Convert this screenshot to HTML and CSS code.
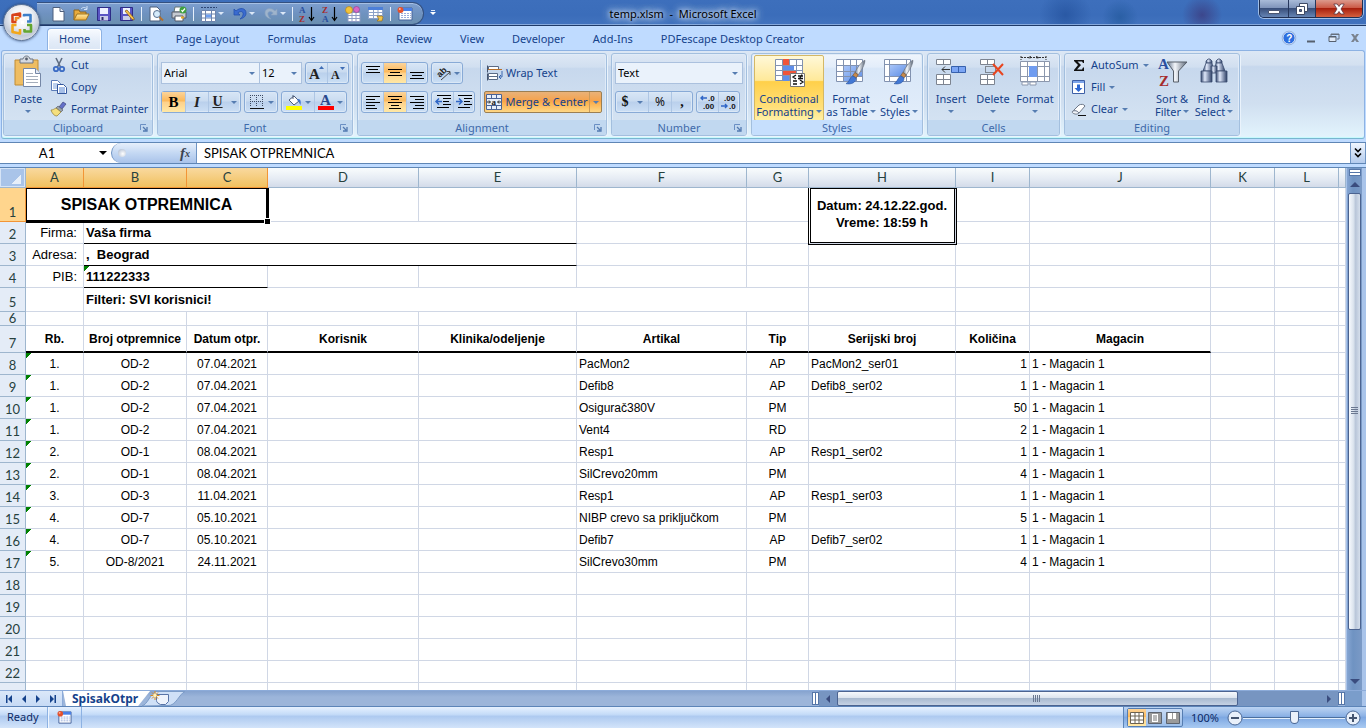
FILE: index.html
```html
<!DOCTYPE html>
<html lang="sr">
<head>
<meta charset="utf-8">
<title>temp.xlsm - Microsoft Excel</title>
<link rel="stylesheet" href="styles.css">
</head>
<body>
<svg class="defs" aria-hidden="true">
  <defs>
    <linearGradient id="gSteel" x1="0" y1="0" x2="1" y2="0"><stop offset="0" stop-color="#5f6f87"/><stop offset=".4" stop-color="#f4f7fb"/><stop offset="1" stop-color="#5b6778"/></linearGradient>
    <linearGradient id="gBlue" x1="0" y1="0" x2="1" y2="1"><stop offset="0" stop-color="#a9c5f8"/><stop offset="1" stop-color="#5f8fe6"/></linearGradient>
    <linearGradient id="gBino" x1="0" y1="0" x2="1" y2="0"><stop offset="0" stop-color="#35496f"/><stop offset=".35" stop-color="#dfe8fa"/><stop offset="1" stop-color="#2c3f66"/></linearGradient>
    <linearGradient id="gFolder" x1="0" y1="0" x2="0" y2="1"><stop offset="0" stop-color="#ffe9a0"/><stop offset="1" stop-color="#f0b040"/></linearGradient>
    <symbol id="record" viewBox="0 0 16 16"><path d="M2 2h13v12H2z" fill="#fff" stroke="#44629c"/><path d="M2 2h13v3H2z" fill="#4a80e8"/><path d="M4 7.500h10M4 9.500h10M4 11.500h10" stroke="#9aaedc" stroke-dasharray="2 1"/><circle cx="3.500" cy="4" r="3" fill="#e4512c"/><circle cx="2.800" cy="3" r="1" fill="#ffb39a"/></symbol>
    <symbol id="launch" viewBox="0 0 8 8"><path d="M.5 6V.5H6" fill="none" stroke="#6a8fc4"/><path d="M3 3l3 3M7 3v4H3" fill="none" stroke="#5279b0" stroke-width="1.300"/></symbol>
    <symbol id="brush" viewBox="0 0 18 24"><path d="M17 1c-3 1-7 7-9 11l3 2C14 10 17 5 17 1z" fill="url(#gSteel)" stroke="#69707c" stroke-width=".6"/><path d="M8 12l3 2-2 3-3-2z" fill="#c98a4b" stroke="#7c5a36" stroke-width=".6"/><path d="M6 15l3 2c0 4-4 6-9 5 3-1 3-5 6-7z" fill="#4278d4" stroke="#2b56a5" stroke-width=".6"/></symbol>
  </defs>
</svg>

<header class="titlebar">
  <div class="qat" role="toolbar" aria-label="Quick access">
    <button aria-label="New"><svg viewBox="0 0 16 16"><path d="M3 1.500h7l4 4V15H3z" fill="#fff" stroke="#4d5f7d"/><path d="M10 1.500v4h4" fill="#dbe5f5" stroke="#4d5f7d"/></svg></button>
    <button aria-label="Open"><svg viewBox="0 0 16 16"><path d="M1 14V4h5l1 2h6v3" fill="#e8ab3c" stroke="#8d651c"/><path d="M1 14L4 8h12l-3 6z" fill="url(#gFolder)" stroke="#a1741f"/><path d="M8 3c2-2 4-2 6 0M14 0v3.500h-3" fill="none" stroke="#d3e3f8"/></svg></button>
    <button aria-label="Save"><svg viewBox="0 0 16 16"><path d="M1.500 1.500h13v13h-13z" fill="#5a55c4" stroke="#2d2b86"/><path d="M4 2h8v6H4z" fill="#eef1ff"/><path d="M4 10h8v4.500H4z" fill="#c9cdea"/><path d="M5.500 11h2v3h-2z" fill="#2b2a6b"/></svg></button>
    <button aria-label="Save as"><svg viewBox="0 0 16 16"><path d="M1.500 1.500h12v13h-12z" fill="#5a55c4" stroke="#2d2b86"/><path d="M4 2h7v6H4z" fill="#eef1ff"/><path d="M4 10h7v4H4z" fill="#c9cdea"/><path d="M6 5l2-1 7 8v2l-2-.5z" fill="#f6c04b" stroke="#7a5415" stroke-width=".7"/></svg></button>
    <span class="qsep"></span>
    <button aria-label="Print preview"><svg viewBox="0 0 16 16"><path d="M2 1h7l3 3v11H2z" fill="#fff" stroke="#4d5f7d"/><circle cx="9" cy="8" r="3.500" fill="#d5ebfa" stroke="#58708f"/><path d="M11.500 11l3.500 3.500" stroke="#b36f2b" stroke-width="2"/></svg></button>
    <button aria-label="Print"><svg viewBox="0 0 16 16"><path d="M4 1h7l1 5H3z" fill="#fff" stroke="#677"/><path d="M1 6h14v6H1z" fill="#c5c9d0" stroke="#545b68"/><path d="M4 10h8v5H4z" fill="#fff" stroke="#545b68"/><path d="M10 11.500h3" stroke="#e8a825" stroke-width="2"/><circle cx="12" cy="4" r="3.500" fill="#3fa03f"/><path d="M10.500 4l1 1.500L14 2.500" fill="none" stroke="#fff" stroke-width="1.200"/></svg></button>
    <span class="qsep"></span>
    <button class="split" aria-label="Format cells"><svg viewBox="0 0 16 16"><path d="M.5 4.500h14v11H.5zM.5 8h14M.5 12h14M4.500 4v11M10.500 4v11" fill="#fff" stroke="#6d84ad"/><path d="M5 8.500h5v3H5z" fill="#6fa0f0"/><path d="M0 1.500h16" stroke="#2d4674" stroke-dasharray="2 1"/></svg><i class="dd light"></i></button>
    <button class="split" aria-label="Undo"><svg viewBox="0 0 16 16"><path d="M2 3v6h6L5.800 7C9 4 12 6 11 9c-.5 2-2 3-3 4 4-1 6-3 6-6 0-5-6-6-10-2z" fill="#3a6bd0" stroke="#2550ad" stroke-width=".8"/></svg><i class="dd light"></i></button>
    <button class="split" aria-label="Redo"><svg viewBox="0 0 16 16"><path d="M14 3v6H8l2.200-2C7 4 4 6 5 9c.5 2 2 3 3 4-4-1-6-3-6-6 0-5 6-6 10-2z" fill="#9fb4cc" stroke="#89a2bf" stroke-width=".6"/></svg><i class="dd light"></i></button>
    <span class="qsep"></span>
    <button aria-label="Sort A to Z"><svg viewBox="0 0 16 16"><text x="0" y="7" class="az blue">A</text><text x="0" y="16" class="az red">Z</text><path d="M12.500 1v13M10 11l2.500 3.500L15 11" fill="none" stroke="#000" stroke-width="1.200"/></svg></button>
    <button aria-label="Sort Z to A"><svg viewBox="0 0 16 16"><text x="0" y="7" class="az red">Z</text><text x="0" y="16" class="az blue">A</text><path d="M12.500 1v13M10 11l2.500 3.500L15 11" fill="none" stroke="#000" stroke-width="1.200"/></svg></button>
    <button aria-label="Pivot"><svg viewBox="0 0 16 16"><path d="M3 6.500h12v9H3zM3 9.500h12M3 12.500h12M7 6v9M11 6v9" fill="#fff" stroke="#8f9cc4"/><circle cx="4" cy="4" r="3.500" fill="#f3c33a" stroke="#a97a14" stroke-width=".6"/><circle cx="11.500" cy="3.500" r="3" fill="#d768c8" stroke="#923a86" stroke-width=".6"/></svg></button>
    <button aria-label="Table properties"><svg viewBox="0 0 16 16"><path d="M.5 1.500h14v11H.5zM1 6.500h13M1 9.500h13M5.500 4v8M10 4v8" fill="#fff" stroke="#8da2c9"/><path d="M0 1h15v3H0z" fill="#4c7fd8"/><path d="M9 10h5l1 1-1 4H9l2-2z" fill="#f2c54e" stroke="#94701f" stroke-width=".7"/></svg></button>
    <span class="qsep"></span>
    <button aria-label="Record macro"><svg><use href="#record"/></svg></button>
  </div>
  <h1 class="doc-title">temp.xlsm&nbsp; -&nbsp; Microsoft Excel</h1>
  <div class="win-buttons">
    <button class="wmin" aria-label="Minimize"><svg viewBox="0 0 12 12"><path d="M.5 7.500h11v3H.5z" fill="#fff" stroke="#4b5671"/></svg></button>
    <button class="wmax" aria-label="Restore"><svg viewBox="0 0 12 12"><path d="M3.500.5h8v8h-8z" fill="#fff" stroke="#3e4a66"/><path d="M.5 3.500h8v8h-8z" fill="#fff" stroke="#3e4a66"/><path d="M3.500 6.500h2v2h-2z" fill="#5c6d90" stroke="#3e4a66"/></svg></button>
    <button class="wclose" aria-label="Close"><svg viewBox="0 0 12 12"><path d="M.8 1h3.400L6 3.500 7.800 1h3.400L8 6l3.200 5H7.800L6 8.500 4.200 11H.8L4 6z" fill="#fff" stroke="#5a3540" stroke-width=".8"/></svg></button>
  </div>
</header>

<button class="office" aria-label="Office menu"><svg viewBox="0 0 24 24"><g fill="none" stroke-width="2.600" stroke-linejoin="round"><path d="M10 6.500V2.500L2.500 4v7h4" stroke="#d8421b"/><path d="M6 10V7h3.500" stroke="#ef8b21"/><path d="M14 5.500V4h6.500v6.500H17" stroke="#3d7fc9"/><path d="M6.500 14h-4v7l7.500 1.500V18" stroke="#f2a71b"/><path d="M17 14h4v6.500h-6.500V18" stroke="#63a62f"/></g><path d="M11 10h3v3h-3z" fill="#fff"/></svg></button>

<nav class="tabs" role="tablist">
  <button role="tab" class="active" aria-selected="true">Home</button>
  <button role="tab">Insert</button>
  <button role="tab">Page Layout</button>
  <button role="tab">Formulas</button>
  <button role="tab">Data</button>
  <button role="tab">Review</button>
  <button role="tab">View</button>
  <button role="tab">Developer</button>
  <button role="tab">Add-Ins</button>
  <button role="tab">PDFescape Desktop Creator</button>
  <div class="doc-controls">
    <button aria-label="Help"><svg viewBox="0 0 14 14"><circle cx="7" cy="7" r="6.200" fill="#2d6fe0" stroke="#fff"/><circle cx="7" cy="7" r="6.800" fill="none" stroke="#5b7fb8" stroke-width=".5"/><text x="4.300" y="10.800" class="q">?</text></svg></button>
    <button aria-label="Minimize workbook"><svg viewBox="0 0 14 14"><path d="M3 10.500h8" stroke="#56606e" stroke-width="2"/></svg></button>
    <button aria-label="Restore workbook"><svg viewBox="0 0 14 14"><path d="M5 5V3h8v5h-2M5 3.500h8" fill="none" stroke="#66707e"/><path d="M3 5.500h7v5H3zM3 6h7" fill="#dfe9f7" stroke="#56606e"/></svg></button>
    <button aria-label="Close workbook"><svg viewBox="0 0 14 14"><path d="M3 3h2.500L7 5l1.500-2H11L8.300 7l2.700 4H8.500L7 9l-1.500 2H3l2.700-4z" fill="#7a838f"/></svg></button>
  </div>
</nav>

<section class="ribbon" aria-label="Home">
  <div class="group g-clip">
    <div class="gbody">
      <button class="big paste"><svg class="i32" viewBox="0 0 32 32"><path d="M3 4h23v25H3z" fill="#efbd62" stroke="#c08c34"/><path d="M8 3h3c1-4 6-4 7 0h3v4H8z" fill="#d5d9e0" stroke="#6d7582"/><circle cx="14.500" cy="3" r="1.400" fill="#565e6b"/><path d="M11.500 12.500h12l5 5v13h-17z" fill="#fff" stroke="#7587a6"/><path d="M23.500 12.500v5h5" fill="#e4ebf6" stroke="#7587a6"/><path d="M14 17.500h7M14 20.500h12M14 23.500h12M14 26.500h12" stroke="#a5aebb"/></svg><span>Paste</span><i class="dd"></i></button>
      <div class="stack">
        <button class="row"><svg viewBox="0 0 16 16"><path d="M5 1l4.500 9M11 1L6.500 10" stroke="#5f6d83" stroke-width="1.600"/><circle cx="5" cy="12" r="2.200" fill="none" stroke="#3c6cc4" stroke-width="1.800"/><circle cx="11" cy="12" r="2.200" fill="none" stroke="#3c6cc4" stroke-width="1.800"/></svg>Cut</button>
        <button class="row"><svg viewBox="0 0 16 16"><path d="M.5 1.500h6l3 3v7h-9z" fill="#fff" stroke="#5a7bb8"/><path d="M2 5h5M2 7h5M2 9h5" stroke="#7aa0dc"/><path d="M6.500 5.500h6l3 3v6h-9z" fill="#fff" stroke="#34589e"/><path d="M8 9h6M8 11h6M8 13h6" stroke="#4f80d0"/></svg>Copy</button>
        <button class="row"><svg viewBox="0 0 16 16"><path d="M12 1l3 2-4 5-3-2z" fill="#6470c8" stroke="#3f467e" stroke-width=".7"/><path d="M7 5l5 4-2 2-5-4z" fill="#9aa3ad" stroke="#5b626c" stroke-width=".7"/><path d="M5 7l5 4-4 4c-3 0-5-3-6-6 2 0 3-1 5-2z" fill="#f5df7d" stroke="#8c7a34" stroke-width=".7"/></svg>Format Painter</button>
      </div>
    </div>
    <div class="glabel">Clipboard<svg class="launch"><use href="#launch"/></svg></div>
  </div>

  <div class="group g-font">
    <div class="gbody col">
      <div class="line">
        <div class="combo-set">
          <span class="combo name"><select aria-label="Font"><option>Arial</option></select><i class="dd"></i></span>
          <span class="combo size"><select aria-label="Font size"><option>12</option></select><i class="dd"></i></span>
        </div>
        <div class="bset"><button class="w22" aria-label="Grow font"><svg viewBox="0 0 16 16"><text x="0" y="14" class="ser s15">A</text><path d="M10 4l2.500-3L15 4z" fill="#3f6db5"/></svg></button><button class="w22" aria-label="Shrink font"><svg viewBox="0 0 16 16"><text x="1" y="14" class="ser s12">A</text><path d="M10 2h5l-2.500 3z" fill="#3f6db5"/></svg></button></div>
      </div>
      <div class="line">
        <div class="bset"><button class="w23 on bold" aria-label="Bold">B</button><button class="w23 ital" aria-label="Italic">I</button><button class="w33 under" aria-label="Underline"><u>U</u><i class="dd"></i></button></div>
        <div class="bset"><button class="w33" aria-label="Borders"><svg viewBox="0 0 16 16"><path d="M1.500 1v12M7.500 1v12M13.500 1v12M1 1.500h13M1 7.500h13" stroke="#3d4a62" stroke-dasharray="1 1"/><path d="M1 14.500h14" stroke="#111"/></svg><i class="dd"></i></button></div>
        <div class="bset"><button class="w33" aria-label="Fill colour"><svg viewBox="0 0 16 16"><path d="M3 6l5-4 5 5-5 4z" fill="#fff" stroke="#4c5c79"/><path d="M7 5V1" stroke="#4c5c79"/><path d="M12 5c3 0 3 3 2.500 6C13 9 13 7 11 6z" fill="#3e74cc"/><path d="M0 12h16v4H0z" fill="#ff0"/></svg><i class="dd"></i></button><button class="w33" aria-label="Font colour"><svg viewBox="0 0 16 16"><text x="2" y="11" class="ser s15 navy">A</text><path d="M0 12h16v4H0z" fill="#f00"/></svg><i class="dd"></i></button></div>
      </div>
    </div>
    <div class="glabel">Font<svg class="launch"><use href="#launch"/></svg></div>
  </div>

  <div class="group g-align">
    <div class="gbody">
      <div class="col">
        <div class="line">
          <div class="bset"><button class="w22" aria-label="Top align"><svg viewBox="0 0 16 16"><path d="M1 1.500h14M3 4.500h10M1 7.500h14" class="k"/></svg></button><button class="w23 on" aria-label="Middle align"><svg viewBox="0 0 16 16"><path d="M1 4.500h14M3 7.500h10M1 10.500h14" class="k"/></svg></button><button class="w22" aria-label="Bottom align"><svg viewBox="0 0 16 16"><path d="M1 7.500h14M3 10.500h10M1 13.500h14" class="k"/></svg></button></div>
          <div class="bset"><button class="w30" aria-label="Orientation"><svg viewBox="0 0 16 16"><text x="2" y="10" transform="rotate(-45 7 8)" class="ori">ab</text><path d="M6 15l9-8M11.500 6.500H15V10" fill="none" stroke="#444"/></svg><i class="dd"></i></button></div>
        </div>
        <div class="line">
          <div class="bset"><button class="w22" aria-label="Align left"><svg viewBox="0 0 16 16"><path d="M1 2.500h14M1 5.500h9M1 8.500h14M1 11.500h9M1 14.500h11" class="k"/></svg></button><button class="w23 on" aria-label="Center"><svg viewBox="0 0 16 16"><path d="M1 2.500h14M4 5.500h8M1 8.500h14M4 11.500h8M2 14.500h12" class="k"/></svg></button><button class="w22" aria-label="Align right"><svg viewBox="0 0 16 16"><path d="M1 2.500h14M6 5.500h9M1 8.500h14M6 11.500h9M4 14.500h11" class="k"/></svg></button></div>
          <div class="bset"><button class="w22" aria-label="Decrease indent"><svg viewBox="0 0 16 16"><path d="M2 1.500h14M8 4.500h8M8 7.500h6M8 10.500h8M2 13.500h12" class="k"/><path d="M7 7.500H1M4 4.500l-3 3 3 3" fill="none" stroke="#2f66c6" stroke-width="1.500"/></svg></button><button class="w22" aria-label="Increase indent"><svg viewBox="0 0 16 16"><path d="M2 1.500h14M8 4.500h8M8 7.500h6M8 10.500h8M2 13.500h12" class="k"/><path d="M0 7.500h6M3 4.500l3 3-3 3" fill="none" stroke="#2f66c6" stroke-width="1.500"/></svg></button></div>
        </div>
      </div>
      <div class="col wrapcol">
        <button class="wrap"><svg viewBox="0 0 16 16"><path d="M.5.5v7M.5 8.500v7" stroke="#44546f"/><path d="M1.500 1.500h10v3h-10zM1.500 8.500h9v3h-9zM1.500 11.500h9v3h-9z" fill="#fff" stroke="#5a6b86"/><path d="M1 4.500h14" fill="none" stroke="#b66f2b"/><path d="M15 6v6h-3M14 10l-2 2 2 2" fill="none" stroke="#3a66b0"/></svg>Wrap Text</button>
        <div class="merge"><button><svg viewBox="0 0 16 16"><path d="M.5.5h15v15H.5zM.5 4.500h15M.5 11.500h15M5.500.5v4M10.500.5v4M5.500 11.500v4M10.500 11.500v4" fill="#e8f0fb" stroke="#4a6496"/><path d="M1 8h3M15 8h-3M3 6.500L4.500 8 3 9.500M13 6.500L11.500 8 13 9.500" fill="none" stroke="#222"/><text x="5.500" y="10.500" class="ser s9">a</text></svg>Merge &amp; Center</button><button class="arrow" aria-label="Merge options"><i class="dd"></i></button></div>
      </div>
    </div>
    <div class="glabel">Alignment<svg class="launch"><use href="#launch"/></svg></div>
  </div>

  <div class="group g-num">
    <div class="gbody col">
      <div class="line"><span class="combo fmt"><select aria-label="Number format"><option>Text</option></select><i class="dd"></i></span></div>
      <div class="line">
        <div class="bset"><button class="w33 cur" aria-label="Currency">$<i class="dd"></i></button><button class="w23 pct" aria-label="Percent">%</button><button class="w22 cur" aria-label="Comma style">,</button></div>
        <div class="bset"><button class="w22" aria-label="Increase decimal"><svg viewBox="0 0 16 16"><text x="8" y="7" class="dec">.0</text><text x="3" y="15" class="dec">.00</text><path d="M7 4H1M3 2L1 4l2 2" fill="none" stroke="#2f66c6" stroke-width="1.400"/></svg></button><button class="w22" aria-label="Decrease decimal"><svg viewBox="0 0 16 16"><text x="3" y="7" class="dec">.00</text><text x="8" y="15" class="dec">.0</text><path d="M0 12h6M4 10l2 2-2 2" fill="none" stroke="#2f66c6" stroke-width="1.400"/></svg></button></div>
      </div>
    </div>
    <div class="glabel">Number<svg class="launch"><use href="#launch"/></svg></div>
  </div>

  <div class="group g-styles hot">
    <div class="gbody">
      <button class="big on cond"><svg class="i32" viewBox="0 0 32 32"><path d="M2.500 3.500h27v21h-27zM2.500 9.500h27M2.500 14.500h27M2.500 19.500h27M9.500 3v21M16.500 3v21M23.500 3v21" fill="#fff" stroke="#8292b0"/><path d="M10 3h6v6h-6zM10 15h13v4H10z" fill="#f0543a"/><path d="M10 10h11v4H10zM10 20h6v5h-6z" fill="#5f8eea"/><path d="M17.500 17.500h14v13h-14z" fill="#fff" stroke="#777"/><path d="M23 19l-3 2 3 2M20 25h4M25 20h5M25 22.500h5M29 18.500l-3 5M27 24l3 2-3 2M20 28h4" fill="none" stroke="#111" stroke-width="1.300"/></svg><span>Conditional</span><span>Formatting <i class="dd"></i></span></button>
      <button class="big"><svg class="i32" viewBox="0 0 32 32"><path d="M1.500 3.500h26v22h-26zM1.500 9.500h26M1.500 15.500h26M1.500 20.500h26M8.500 3v22M15.500 3v22M21.500 3v22" fill="#fff" stroke="#8292b0"/><path d="M9 10h6v5H9zM16 10h5v5h-5zM22 10h5v5h-5zM9 16h6v4H9zM16 16h5v4h-5zM22 16h5v4h-5zM9 21h6v4H9z" fill="url(#gBlue)"/><use href="#brush" x="11" y="3" width="20" height="27"/></svg><span>Format</span><span>as Table <i class="dd"></i></span></button>
      <button class="big"><svg class="i32" viewBox="0 0 32 32"><path d="M1.500 3.500h26v22h-26zM1.500 8.500h26M1.500 20.500h26M6.500 3v22M23.500 3v22" fill="#fff" stroke="#8292b0"/><path d="M7 9h16v11H7z" fill="url(#gBlue)"/><use href="#brush" x="11" y="3" width="20" height="27"/></svg><span>Cell</span><span>Styles <i class="dd"></i></span></button>
    </div>
    <div class="glabel">Styles</div>
  </div>

  <div class="group g-cells">
    <div class="gbody">
      <button class="big"><svg class="i32" viewBox="0 0 32 32"><path d="M1.500 3.500h14v5h-14zM8.500 3.500v5M1.500 18.500h14v10h-14zM8.500 18.500v10M1.500 23.500h14" fill="#fff" stroke="#7d8490"/><path d="M16.500 10.500h14v6h-14z" fill="#7ba5f4" stroke="#3761ad"/><path d="M23.500 10.500v6" stroke="#3761ad"/><path d="M15 13.500H7M10 10.500l-3 3 3 3" fill="none" stroke="#333"/></svg><span>Insert</span><i class="dd"></i></button>
      <button class="big"><svg class="i32" viewBox="0 0 32 32"><path d="M3.500 3.500h14v5h-14zM10.500 3.500v5M3.500 18.500h14v10h-14zM10.500 18.500v10M3.500 23.500h14" fill="#fff" stroke="#7d8490"/><path d="M8.500 10.500h10v6h-10z" fill="none" stroke="#333" stroke-dasharray="1 1"/><path d="M16 8l10 11M26 8L16 19" stroke="#e8451f" stroke-width="2"/></svg><span>Delete</span><i class="dd"></i></button>
      <button class="big"><svg class="i32" viewBox="0 0 32 32"><path d="M2 1.500h25M2 0v4M27 0v4M12 .500l-3 1 3 1M17 .5l3 1-3 1" fill="none" stroke="#333" stroke-dasharray="2 1"/><path d="M1.500 5.500h29v20h-29zM1.500 10.500h29M1.500 20.500h29M8.500 5v20M18.500 5v20M25.500 5v20" fill="#fff" stroke="#8b97ad"/><path d="M10 10h8v11h-8z" fill="#6f9cf0"/><path d="M3 26h6v3H3zM11 26h6v3h-6z" fill="#fff" stroke="#8b97ad"/></svg><span>Format</span><i class="dd"></i></button>
    </div>
    <div class="glabel">Cells</div>
  </div>

  <div class="group g-edit">
    <div class="gbody">
      <div class="stack">
        <button class="row"><svg viewBox="0 0 16 16"><path d="M3 3h10v3h-1L11 4.500H6.500L10 8l-4 4.500h5l1-2h1V14H3v-1l4-5-4-4z" fill="#111"/></svg>AutoSum <i class="dd"></i></button>
        <button class="row"><svg viewBox="0 0 16 16"><path d="M1.500 1.500h12v13h-12z" fill="#fff" stroke="#3d5fa6"/><path d="M2 2h11v2H2z" fill="#7ca4ea"/><path d="M6 5.500h3V9h2.500l-4 4-4-4H6z" fill="#2d67d2"/></svg>Fill <i class="dd"></i></button>
        <button class="row"><svg viewBox="0 0 16 16"><path d="M1 11l7-7c2-1 5-1 6 1l-6 7c-2 2-6 1-7-1z" fill="#fff" stroke="#6d7788"/><path d="M1 11c1-2 5-2 7 1" fill="#dfe5ef" stroke="#6d7788"/><path d="M7 14.500h8" stroke="#111"/></svg>Clear <i class="dd"></i></button>
      </div>
      <button class="big"><svg class="i32" viewBox="0 0 32 32"><text x="2" y="13" class="az2 blue">A</text><text x="3" y="30" class="az2 red">Z</text><path d="M11 6h20L22.500 15v11h-5V15z" fill="url(#gSteel)" stroke="#565e69"/></svg><span>Sort &amp;</span><span>Filter <i class="dd"></i></span></button>
      <button class="big"><svg class="i32" viewBox="0 0 32 32"><g fill="url(#gBino)" stroke="#3b4c70" stroke-width=".8"><path d="M8 7V5l2-2h2l2 2v2z"/><path d="M18 7V5l2-2h2l2 2v2z"/><path d="M5 15l3-8h6l1.500 8z"/><path d="M16.500 15L18 7h6l3 8z"/><path d="M13 10h6v7h-6z"/><path d="M3 15h11v11H3z"/><path d="M18 15h11v11H18z"/></g></svg><span>Find &amp;</span><span>Select <i class="dd"></i></span></button>
    </div>
    <div class="glabel">Editing</div>
  </div>
</section>

<div class="formula-bar">
  <input class="name-box" aria-label="Name box" value="A1">
  <button class="name-drop" aria-label="Names"><i class="dd black"></i></button>
  <div class="fx"><span class="knob"></span><button aria-label="Insert function">f<small>x</small></button></div>
  <input class="formula" aria-label="Formula" value="SPISAK OTPREMNICA">
  <button class="expand" aria-label="Expand formula bar"><svg viewBox="0 0 10 12"><path d="M2 1.500l3 3 3-3M2 6.500l3 3 3-3" fill="none" stroke="#000" stroke-width="1.600"/></svg></button>
</div>

<main class="workspace">
  <div class="sheet">
    <table>
      <colgroup><col class="c-h"><col class="c-a"><col class="c-b"><col class="c-c"><col class="c-d"><col class="c-e"><col class="c-f"><col class="c-g"><col class="c-h1"><col class="c-i"><col class="c-j"><col class="c-k"><col class="c-k"><col></colgroup>
      <thead><tr><th class="corner"></th><th class="sel">A</th><th class="sel">B</th><th class="sel">C</th><th>D</th><th>E</th><th>F</th><th>G</th><th>H</th><th>I</th><th>J</th><th>K</th><th>L</th><th></th></tr></thead>
      <tbody>
        <tr class="r1"><th class="sel">1</th><td colspan="3" class="title">SPISAK OTPREMNICA<span class="handle"></span></td><td><td><td><td><td rowspan="2" class="stamp">Datum: 24.12.22.god.<br>Vreme: 18:59 h</td><td><td><td><td><td></tr>
        <tr class="info"><th>2</th><td class="lab">Firma:</td><td colspan="4" class="val line-b">Vaša firma</td><td><td><td><td><td><td><td></tr>
        <tr class="info"><th>3</th><td class="lab">Adresa:</td><td colspan="4" class="val line-b">,&nbsp; Beograd</td><td><td><td><td><td><td><td><td></tr>
        <tr class="info"><th>4</th><td class="lab">PIB:</td><td colspan="2" class="val line-b flag">111222333</td><td><td><td><td><td><td><td><td><td><td></tr>
        <tr class="r5"><th>5</th><td></td><td colspan="6" class="val">Filteri: SVI korisnici!</td><td><td><td><td><td><td></tr>
        <tr class="r6"><th>6</th><td><td><td><td><td><td><td><td><td><td><td><td><td></tr>
        <tr class="r7"><th>7</th><td class="hd">Rb.</td><td class="hd">Broj otpremnice</td><td class="hd">Datum otpr.</td><td class="hd">Korisnik</td><td class="hd">Klinika/odeljenje</td><td class="hd">Artikal</td><td class="hd">Tip</td><td class="hd">Serijski broj</td><td class="hd">Količina</td><td class="hd">Magacin</td><td><td><td></tr>
        <tr><th>8</th><td class="c flag">1.</td><td class="c">OD-2</td><td class="c">07.04.2021</td><td><td><td>PacMon2</td><td class="c">AP</td><td>PacMon2_ser01</td><td class="n">1</td><td>1 - Magacin 1</td><td><td><td></tr>
        <tr><th>9</th><td class="c flag">1.</td><td class="c">OD-2</td><td class="c">07.04.2021</td><td><td><td>Defib8</td><td class="c">AP</td><td>Defib8_ser02</td><td class="n">1</td><td>1 - Magacin 1</td><td><td><td></tr>
        <tr><th>10</th><td class="c flag">1.</td><td class="c">OD-2</td><td class="c">07.04.2021</td><td><td><td>Osigurač380V</td><td class="c">PM</td><td></td><td class="n">50</td><td>1 - Magacin 1</td><td><td><td></tr>
        <tr><th>11</th><td class="c flag">1.</td><td class="c">OD-2</td><td class="c">07.04.2021</td><td><td><td>Vent4</td><td class="c">RD</td><td></td><td class="n">2</td><td>1 - Magacin 1</td><td><td><td></tr>
        <tr><th>12</th><td class="c flag">2.</td><td class="c">OD-1</td><td class="c">08.04.2021</td><td><td><td>Resp1</td><td class="c">AP</td><td>Resp1_ser02</td><td class="n">1</td><td>1 - Magacin 1</td><td><td><td></tr>
        <tr><th>13</th><td class="c flag">2.</td><td class="c">OD-1</td><td class="c">08.04.2021</td><td><td><td>SilCrevo20mm</td><td class="c">PM</td><td></td><td class="n">4</td><td>1 - Magacin 1</td><td><td><td></tr>
        <tr><th>14</th><td class="c flag">3.</td><td class="c">OD-3</td><td class="c">11.04.2021</td><td><td><td>Resp1</td><td class="c">AP</td><td>Resp1_ser03</td><td class="n">1</td><td>1 - Magacin 1</td><td><td><td></tr>
        <tr><th>15</th><td class="c flag">4.</td><td class="c">OD-7</td><td class="c">05.10.2021</td><td><td><td>NIBP crevo sa priključkom</td><td class="c">PM</td><td></td><td class="n">5</td><td>1 - Magacin 1</td><td><td><td></tr>
        <tr><th>16</th><td class="c flag">4.</td><td class="c">OD-7</td><td class="c">05.10.2021</td><td><td><td>Defib7</td><td class="c">AP</td><td>Defib7_ser02</td><td class="n">1</td><td>1 - Magacin 1</td><td><td><td></tr>
        <tr><th>17</th><td class="c flag">5.</td><td class="c">OD-8/2021</td><td class="c">24.11.2021</td><td><td><td>SilCrevo30mm</td><td class="c">PM</td><td></td><td class="n">4</td><td>1 - Magacin 1</td><td><td><td></tr>
        <tr><th>18</th><td><td><td><td><td><td><td><td><td><td><td><td><td></tr>
        <tr><th>19</th><td><td><td><td><td><td><td><td><td><td><td><td><td></tr>
        <tr><th>20</th><td><td><td><td><td><td><td><td><td><td><td><td><td></tr>
        <tr><th>21</th><td><td><td><td><td><td><td><td><td><td><td><td><td></tr>
        <tr><th>22</th><td><td><td><td><td><td><td><td><td><td><td><td><td></tr>
        <tr><th></th><td><td><td><td><td><td><td><td><td><td><td><td><td></tr>
      </tbody>
    </table>
  </div>
  <div class="vscroll">
    <span class="splitbox"></span>
    <i class="arr up"></i>
    <div class="vtrack"><div class="vthumb"><span class="grip"></span></div></div>
    <i class="arr down"></i>
  </div>
</main>

<div class="sheet-bar">
  <div class="sheet-nav">
    <button aria-label="First sheet"><svg viewBox="0 0 8 8"><path d="M1 0h1.500v8H1zM7 0v8L3 4z"/></svg></button>
    <button aria-label="Previous sheet"><svg viewBox="0 0 8 8"><path d="M6 0v8L2 4z"/></svg></button>
    <button aria-label="Next sheet"><svg viewBox="0 0 8 8"><path d="M2 0v8l4-4z"/></svg></button>
    <button aria-label="Last sheet"><svg viewBox="0 0 8 8"><path d="M1 0v8l4-4zM5.500 0H7v8H5.500z"/></svg></button>
  </div>
  <button class="sheet-tab">SpisakOtpr</button>
  <button class="new-sheet" aria-label="Insert sheet"><svg viewBox="0 0 44 15"><path d="M0 15C6 13 8 3 14 .5h29C37 3 34 15 26 14.500z" fill="#cfe0f7" stroke="#7c9cc8"/><path d="M14.500 3.500h12v7l-3 3h-5c-2-1-4-2-4-4z" fill="#eef3fc" stroke="#5874a8"/><path d="M13 0v9M8.500 4.500h9M10 1.500l6 6M16 1.500l-6 6" stroke="#d98a1c"/><circle cx="13" cy="4.500" r="1.700" fill="#fff3b8"/></svg></button>
  <span class="fill"></span>
  <span class="hbox"></span>
  <div class="hscroll">
    <i class="arr left"></i>
    <div class="htrack"><div class="hthumb"><span class="grip v"></span></div></div>
    <i class="arr right"></i>
  </div>
  <span class="hbox"></span>
  <span class="hcorner"></span>
</div>

<footer class="status">
  <span class="ready">Ready</span>
  <button class="rec" aria-label="Record macro"><svg><use href="#record"/></svg></button>
  <span class="fill"></span>
  <div class="zoom">
    <div class="views">
      <button class="on" aria-label="Normal view"><svg viewBox="0 0 14 12"><path d="M.5.5h13v11H.5zM.5 4h13M.5 8h13M5 .5v11M9 .5v11" fill="#fff" stroke="#6b6252"/></svg></button>
      <button aria-label="Page layout view"><svg viewBox="0 0 14 12"><path d="M.5.5h13v11H.5z" fill="#9a9a9a" stroke="#5d6470"/><path d="M4 2h6v8H4z" fill="#fff"/><path d="M5 4h4M5 6h4M5 8h4" stroke="#777"/></svg></button>
      <button aria-label="Page break view"><svg viewBox="0 0 14 12"><path d="M.5.5h13v11H.5z" fill="#9a9a9a" stroke="#5d6470"/><path d="M2 1h4v6H2zM7 1h3v6H7z" fill="#fff"/></svg></button>
    </div>
    <span class="pct100">100%</span>
    <button class="round" aria-label="Zoom out"><svg viewBox="0 0 16 16"><circle cx="8" cy="8" r="7" fill="#e9f0fa" stroke="#4a6795"/><path d="M4 8h8" stroke="#44546f" stroke-width="2"/></svg></button>
    <input type="range" aria-label="Zoom" min="0" max="100" value="50">
    <button class="round" aria-label="Zoom in"><svg viewBox="0 0 16 16"><circle cx="8" cy="8" r="7" fill="#e9f0fa" stroke="#4a6795"/><path d="M4 8h8M8 4v8" stroke="#44546f" stroke-width="2"/></svg></button>
  </div>
</footer>
</body>
</html>
```
FILE: styles.css
```css
* { box-sizing: border-box; }
body {
  margin: 0;
  height: 100vh;
  display: flex;
  flex-direction: column;
  overflow: hidden;
  position: relative;
  background: #bfdbff;
  font: 11px/14px "Noto Sans", "Open Sans", sans-serif;
  color: #15428b;
}
button, input, select { font: inherit; color: inherit; margin: 0; padding: 0; border: 0; background: none; border-radius: 0; }
button { display: flex; align-items: center; justify-content: center; white-space: nowrap; }
svg { width: 16px; height: 16px; flex: none; display: block; overflow: visible; }
.defs { position: absolute; width: 0; height: 0; }
.fill { flex: 1; }

.dd { display: inline-block; flex: none; width: 0; height: 0; border: 3px solid transparent; border-top-color: #567db1; border-bottom: 0; }
.dd.light { border-top-color: #dce8f8; }
.dd.black { border-width: 4px; border-top-color: #000; border-bottom: 0; }

/* title bar */
.titlebar {
  flex: none;
  height: 26px;
  display: grid;
  grid-template-columns: 1fr auto 1fr;
  align-items: start;
  background:
    radial-gradient(circle at 88% 60%, rgba(60, 45, 110, .6), transparent 20px),
    radial-gradient(circle at 78% 60%, rgba(30, 75, 150, .6), transparent 26px),
    radial-gradient(circle at 82% 70%, rgba(30, 85, 150, .6), transparent 18px),
    linear-gradient(#3d6fbc, #3b6dba 60%, #4273be);
  border-bottom: 1px solid #1f3a68;
  box-shadow: inset 0 -1px #86a9dc;
}
.qat {
  justify-self: start;
  display: flex;
  align-items: center;
  gap: 1px;
  height: 23px;
  margin: 2px 0 0 37px;
  padding: 0 7px 0 10px;
  border: 1px solid #34507f;
  border-left: 0;
  border-radius: 0 12px 12px 0;
  background: linear-gradient(#7d9fd0, #6f92c0 50%, #6a8fb0);
  box-shadow: inset 0 1px #a6c0e4;
  position: relative;
}
.qat::after { content: ""; position: absolute; left: 100%; top: 9px; margin-left: 7px; border: 3px solid transparent; border-top-color: #fff; border-bottom: 0; box-shadow: 0 -3px 0 -1px #dce8f8; }
.qat button { width: 22px; height: 21px; }
.qat .split { width: 30px; gap: 1px; }
.qsep { width: 1px; height: 14px; margin: 0 2px; background: #e6effb; }
.az { font: bold 9px "Liberation Serif", serif; }
.az2 { font: bold 15px "Liberation Serif", serif; }
.blue { fill: #2a4f9e; }
.red { fill: #a52c2c; }
.doc-title {
  margin: 6px 0 0;
  font: 11px/16px "Noto Sans", sans-serif;
  color: #000;
  text-shadow: 0 0 5px #fff, 0 0 8px #cfe0f8, 0 0 10px #cfe0f8;
}
.win-buttons { justify-self: end; display: flex; margin-right: 3px; border: 1px solid #1f2f52; border-top: 0; border-radius: 0 0 5px 5px; overflow: hidden; box-shadow: 0 0 0 1px #9fbde6; }
.win-buttons button { height: 17px; background: linear-gradient(#a9bbd8, #8095bb 45%, #394f7a 50%, #6685b5); border-right: 1px solid #26375c; }
.win-buttons svg { width: 12px; height: 12px; }
.win-buttons .wmin { width: 29px; }
.win-buttons .wmax { width: 27px; }
.win-buttons .wclose { width: 46px; border: 0; background: linear-gradient(#dc9a8c, #cc5b47 45%, #a8200d 50%, #d5603f); }

.office {
  position: absolute;
  z-index: 2;
  left: 3px;
  top: 4px;
  width: 37px;
  height: 37px;
  border-radius: 50%;
  border: 1px solid #5f7596;
  background: radial-gradient(circle at 50% 35%, #fff 0, #f1f3f7 35%, #c2cad8 65%, #f5f8fc 100%);
  box-shadow: 0 0 3px #2c4570;
}
.office svg { width: 24px; height: 24px; }

/* ribbon tabs */
.tabs { flex: none; height: 24px; display: flex; align-items: flex-end; padding-left: 47px; background: #bfdbff; }
.tabs > button { height: 22px; padding: 0 14px; }
.tabs > .active {
  position: relative;
  z-index: 1;
  padding: 0 11px 2px;
  border: 1px solid #8db2e3;
  border-bottom: 0;
  border-radius: 4px 4px 0 0;
  background: linear-gradient(#f8fbff, #e3ecf8 60%, #dbe6f4);
  box-shadow: inset 0 0 0 1px #fff;
  margin-right: 1px;
}
.doc-controls { margin-left: auto; align-self: center; display: flex; gap: 8px; padding-right: 4px; }
.doc-controls svg { width: 14px; height: 14px; }
.q { font: bold 10px "Liberation Sans", sans-serif; fill: #fff; }

/* ribbon */
.ribbon {
  flex: none;
  height: 89px;
  display: flex;
  gap: 4px;
  margin: 0 1px;
  padding: 2px 1px;
  border: 1px solid #8db2e3;
  border-bottom: 1px solid #79b6cf;
  border-radius: 3px;
  background: linear-gradient(#dce7f5, #d3e0f0 16%, #c7d8ed 18%, #d0dff0 60%, #e3f4fd);
  box-shadow: inset 0 -1px #c6fafd;
}
.group {
  flex: none;
  display: flex;
  flex-direction: column;
  border: 1px solid #a3bfde;
  border-radius: 3px;
  background: linear-gradient(#dee8f5, #d1dff0 16%, #c7d8ed 18%, #d7e5f3);
  box-shadow: 1px 1px #eaf3fc, inset 0 0 0 1px #e0ebf8;
}
.g-clip { min-width: 150px; }
.g-font { min-width: 195px; }
.g-align { min-width: 250px; }
.g-num { min-width: 136px; }
.g-styles { min-width: 172px; }
.g-cells { min-width: 133px; }
.g-edit { min-width: 176px; }
.hot { background: linear-gradient(#eff5fc, #e3edfa 16%, #d9e7f8 18%, #e5effb); }
.gbody { flex: 1; display: flex; min-height: 0; padding: 0 3px; }
.glabel { flex: none; height: 15px; line-height: 16px; position: relative; text-align: center; background: #c1d8f0; color: #3e6aaa; border-radius: 0 0 2px 2px; }
.hot .glabel { background: #c6dffd; }
.launch { position: absolute; right: 4px; top: 4px; width: 8px; height: 8px; }
.col { display: flex; flex-direction: column; justify-content: flex-start; padding-top: 8px; gap: 7px; }
.line { display: flex; gap: 3px; height: 22px; }

.big { flex-direction: column; justify-content: flex-start; padding-top: 2px; width: 42px; height: 66px; line-height: 13px; }
.big span { display: flex; align-items: center; gap: 2px; }
.big svg { margin-bottom: 4px; }
.i32 { width: 32px; height: 32px; }
.big > .dd { margin-top: 5px; }
.g-cells .gbody { padding: 0 2px; }
.g-styles .gbody { padding: 1px 2px 0; gap: 2px; }
.g-styles .big { width: 50px; padding-top: 1px; }
.g-styles .big:last-child { width: 42px; }
.g-styles .cond { width: 70px; border: 1px solid #d4b865; border-radius: 2px; padding-top: 0; background: linear-gradient(#fff8d8, #ffe99a 38%, #ffd04a 40%, #ffe07a 80%, #fff0a6); }
.stack { display: flex; flex-direction: column; }
.row { height: 22px; justify-content: flex-start; gap: 4px; padding: 0 0 0 2px; }
.g-edit .gbody { padding: 0; }
.g-edit .stack { padding-left: 4px; flex: 1; }
.g-edit .big:last-child { margin-right: 4px; }

.combo-set { display: flex; width: 141px; }
.combo { position: relative; display: flex; align-items: center; height: 22px; border: 1px solid #abc1de; background: #eaf2fb; color: #000; }
.combo select { appearance: none; width: 100%; height: 100%; padding-left: 2px; color: #000; outline: 0; }
.combo .dd { position: absolute; right: 4px; }
.combo.name { flex: 1; }
.combo.size { width: 43px; margin-left: -1px; }
.combo.fmt { width: 128px; }

.bset { display: flex; height: 22px; border: 1px solid #88aad6; border-radius: 3px; background: linear-gradient(#d8e6f6, #c9dbf0 45%, #bad0ec 50%, #cbdff5); box-shadow: inset 0 0 0 1px #dbe8f6; }
.bset button { height: 20px; gap: 3px; }
.bset button + button { border-left: 1px solid #aec6e4; }
.w22 { width: 21px; }
.w23 { width: 23px; }
.w30 { width: 30px; }
.w33 { width: 32px; }
.on { background: linear-gradient(#fbd49b, #fcb859 45%, #fdd08a 50%, #ffe8a5); }
.bold { font: bold 15px "Liberation Serif", serif; color: #000; }
.ital { font: italic bold 15px "Liberation Serif", serif; color: #222; }
.under { font: bold 14px "Liberation Serif", serif; color: #222; }
.bset .under { gap: 8px; }
.cur { font: bold 14px "Liberation Serif", serif; color: #111; }
.bset .cur { gap: 8px; }
.pct { color: #111; font-size: 12px; }
.ser { font-family: "Liberation Serif", serif; font-weight: bold; fill: #222; }
.s15 { font-size: 15px; }
.s12 { font-size: 12px; }
.s9 { font-size: 9px; }
.navy { fill: #28488c; }
.ori { font: bold 9px "Liberation Sans", sans-serif; fill: #222; }
.dec { font: bold 8px "Liberation Sans", sans-serif; fill: #111; }
.k { stroke: #000; fill: none; }
.wrapcol { margin-left: 5px; padding-left: 4px; position: relative; }
.wrapcol::before { content: ""; position: absolute; left: 0; top: 6px; bottom: 4px; width: 1px; background: #9bb8dc; box-shadow: 1px 0 #e5eff9; }
.wrap { height: 22px; justify-content: flex-start; gap: 3px; padding-left: 3px; }
.merge { display: flex; height: 22px; width: 118px; border: 1px solid #9c7f52; border-radius: 2px; background: linear-gradient(#e9b279, #f6a24a 45%, #fdb14f 55%, #fed785); }
.merge button:first-child { flex: 1; gap: 3px; }
.merge .arrow { width: 12px; border-left: 1px solid #c89b5d; }

/* formula bar */
.formula-bar { flex: none; height: 22px; margin-top: 3px; display: flex; border: 1px solid #5f86b5; border-width: 1px 0; background: #fff; color: #000; font: 13px/20px Lato, sans-serif; }
.name-box { width: 94px; text-align: center; outline: 0; }
.name-drop { width: 17px; }
.fx { width: 86px; display: flex; align-items: center; justify-content: space-between; padding: 0 6px; border: 1px solid #6e94c4; border-width: 0 1px; border-radius: 11px 0 0 11px; background: linear-gradient(#e6effb, #c4d8f3 50%, #a9c3ea); }
.fx button { font: italic bold 15px "Liberation Serif", serif; color: #3a4350; }
.fx small { font-size: 10px; }
.knob { width: 8px; height: 8px; border-radius: 50%; background: radial-gradient(circle at 60% 60%, #fff, #a4b4cc); }
.formula { flex: 1; padding-left: 7px; outline: 0; }
.expand { width: 16px; border: 1px solid #6e94c4; border-width: 0 1px; background: linear-gradient(#f0f6fe, #b3cbed); }
.expand svg { width: 10px; height: 12px; }

/* worksheet */
.workspace { flex: 1; min-height: 0; display: flex; margin-top: 3px; border-top: 1px solid #5f86b5; background: #a9c4ea; padding-right: 4px; }
.sheet { flex: 1; min-width: 0; overflow: hidden; background: #fff; }
table { table-layout: fixed; width: 100%; border-collapse: separate; border-spacing: 0; color: #000; font: 12px/14px "Liberation Sans", sans-serif; }
.c-h { width: 26px; } .c-a { width: 58px; } .c-b { width: 103px; } .c-c { width: 81px; } .c-d { width: 151px; }
.c-e { width: 158px; } .c-f { width: 170px; } .c-g { width: 62px; } .c-h1 { width: 147px; } .c-i { width: 74px; }
.c-j { width: 181px; } .c-k { width: 64px; }
th { font: 13px/13px Lato, sans-serif; color: #27413e; padding: 0; }
thead th { height: 20px; vertical-align: middle; border-right: 1px solid #9eb6ce; border-bottom: 1px solid #9eb6ce; background: linear-gradient(#f9fcfd, #e6ecf4 55%, #d3dbe9); }
thead .sel { background: linear-gradient(#f9d99f, #f1c15f); border-color: #f29536; }
.corner, thead .corner { background: linear-gradient(135deg, transparent 60%, #e7eff9 60%) 9px 4px / 12px 12px no-repeat, #a9c4e9; box-shadow: inset 0 0 0 1px #d6e4f6; }
tbody th { vertical-align: bottom; padding-bottom: 2px; background: #e4ecf7; border-right: 1px solid #9eb6ce; border-bottom: 1px solid #9eb6ce; }
tbody .sel { background: #ffd58d; border-color: #f29536; }
tbody tr { height: 22px; }
td { position: relative; padding: 0 2px; border-right: 1px solid #d0d7e5; border-bottom: 1px solid #d0d7e5; white-space: nowrap; overflow: visible; vertical-align: middle; }
tbody .r1 { height: 34px; }
tbody .r5 { height: 24px; }
tbody .r6 { height: 14px; }
tbody .r7 { height: 27px; }
.r6 th { padding: 0; }
.title { text-align: center; font-size: 16px; font-weight: bold; }
.title::after { content: ""; position: absolute; inset: 0 -2px -2px 0; border: 1px solid #000; border-width: 1px 3px 3px 1px; z-index: 1; }
.handle { position: absolute; right: -4px; bottom: -4px; width: 7px; height: 7px; border: 1px solid #fff; background: #000; z-index: 2; }
.stamp { text-align: center; font-size: 13px; line-height: 17px; font-weight: bold; padding-bottom: 3px; }
.stamp::after { content: ""; position: absolute; inset: 0 -2px -2px -1px; border: 3px double #000; border-top: 1px solid #000; z-index: 1; }
.lab { text-align: right; font-size: 13px; padding-right: 6px; }
.val { font-size: 13px; font-weight: bold; }
.line-b { border-bottom-color: #000; }
.hd { text-align: center; font-weight: bold; border-bottom: 2px solid #000; }
.c { text-align: center; }
.n { text-align: right; }
.flag { background: linear-gradient(135deg, #008000 4px, transparent 4px) no-repeat; }

.vscroll { width: 16px; display: flex; flex-direction: column; align-items: center; background: linear-gradient(90deg, #86a5d2, #6f93c2 40%, #7b9ac6); border-left: 1px solid #a9c4ea; }
.splitbox { width: 12px; height: 7px; margin-top: 1px; border: 1px solid #5576a8; background: linear-gradient(#fff 2px, #5576a8 2px, #5576a8 3px, #fff 3px); }
.arr { flex: none; width: 0; height: 0; border: 5px solid transparent; }
.up { border-top: 0; border-bottom-color: #3a4c7e; margin: 6px 0; }
.down { border-bottom: 0; border-top-color: #3a4c7e; margin: 6px 0; }
.vtrack { flex: 1; width: 13px; }
.vthumb { height: 91%; display: flex; align-items: center; justify-content: center; border: 1px solid #4b6390; border-radius: 2px; background: linear-gradient(90deg, #f6f9fd, #dbe4ee 40%, #b9c6d9 60%, #d5dfec); }
.grip { width: 7px; height: 8px; background: repeating-linear-gradient(#6a7890 0 1px, transparent 1px 2px); }
.grip.v { width: 8px; height: 7px; background: repeating-linear-gradient(90deg, #6a7890 0 1px, transparent 1px 2px); }

/* sheet tab bar */
.sheet-bar { flex: none; height: 17px; display: flex; background: linear-gradient(#86a3cf, #9cb5da 40%); border-top: 1px solid #8cabd9; border-bottom: 1px solid #5c84b8; }
.sheet-nav { width: 63px; display: flex; align-items: center; justify-content: space-around; padding: 0 2px; background: linear-gradient(#dbe8f9, #c6daf5); border-right: 1px solid #8cabd9; }
.sheet-nav button { width: 14px; height: 14px; }
.sheet-nav svg { width: 8px; height: 8px; fill: #15428b; }
.sheet-tab { padding: 0 12px 0 9px; font-size: 12px; font-weight: bold; background: #fff; clip-path: polygon(0 0, 100% 0, calc(100% - 12px) 100%, 3px 100%); }
.new-sheet { margin-left: -8px; }
.new-sheet svg { width: 44px; height: 15px; }
.hbox { width: 7px; margin: 1px 0; border: 1px solid #5576a8; background: linear-gradient(90deg, #fff 2px, #5576a8 2px, #5576a8 3px, #fff 3px); }
.hscroll { flex: 0 0 38%; display: flex; align-items: center; background: #7795c1; }
.left { margin: 0 7px; border-width: 4px; border-left-width: 0; border-right-color: #3a4c7e; }
.right { margin: 0 7px; border-width: 4px; border-right-width: 0; border-left-color: #3a4c7e; }
.htrack { flex: 1; height: 100%; }
.hthumb { width: 83%; height: 100%; display: flex; align-items: center; justify-content: center; border: 1px solid #4b6390; border-radius: 2px; background: linear-gradient(#f6f9fd, #dbe4ee 45%, #a9bad0 50%, #c5d2e4); }
.hcorner { width: 21px; background: #7a9dcb; border-right: 4px solid #a9c4ea; }

/* status bar */
.status { flex: none; height: 21px; display: flex; align-items: stretch; background: linear-gradient(#e6f1ff, #c5dcf8 35%, #aecaf0 45%, #d3e4fa); color: #0b2a66; }
.ready { padding: 3px 8px 0 7px; border-right: 1px solid #8db2e3; box-shadow: 1px 0 #eef5fe; }
.rec { width: 34px; border-right: 1px solid #8db2e3; }
.rec svg { width: 15px; height: 15px; }
.zoom { display: flex; align-items: center; padding: 0 5px 0 3px; border-left: 1px solid #5c84b8; background: linear-gradient(#bcd4f3, #8fb4e6 40%, #7ea8e2 50%, #a9caf2); }
.views { display: flex; height: 19px; border: 1px solid #567db1; border-radius: 2px; margin-right: 8px; background: linear-gradient(#c8dbf5, #9dbfea); }
.views button { width: 18px; }
.views svg { width: 14px; height: 12px; }
.pct100 { margin-right: 8px; }
.round { width: 16px; height: 18px; }
.zoom input { appearance: none; width: 102px; height: 18px; background: linear-gradient(transparent 8px, #4a6f9f 8px, #4a6f9f 9px, #e4effc 9px, #e4effc 10px, transparent 10px); outline: 0; }
.zoom input::-webkit-slider-thumb { appearance: none; width: 9px; height: 13px; background: #eaf1fb; border: 1px solid #4a6795; border-radius: 1px 1px 5px 5px; }
```
